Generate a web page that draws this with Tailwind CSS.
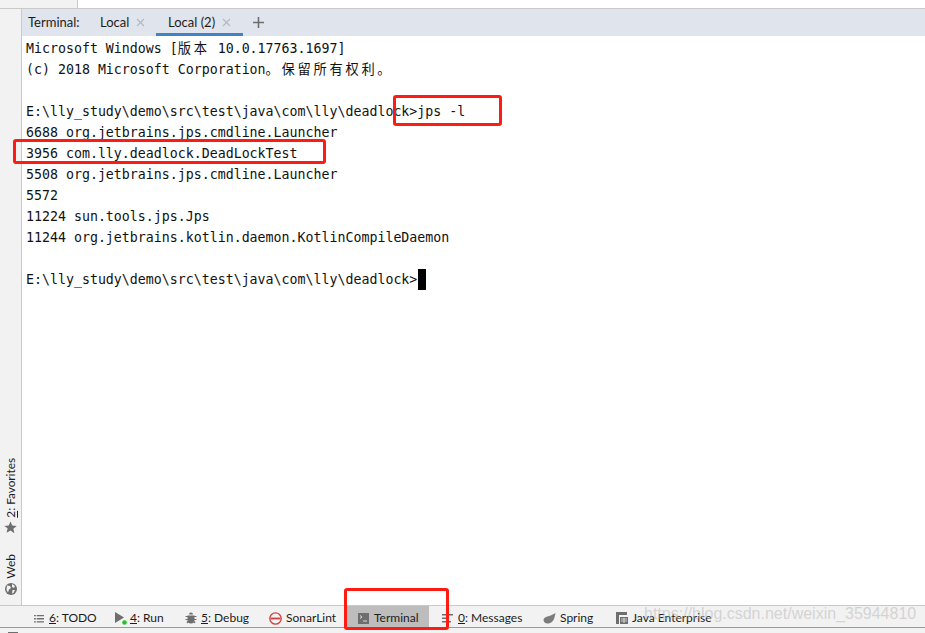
<!DOCTYPE html>
<html lang="zh">
<head>
  <meta charset="UTF-8" />
  <title>Terminal</title>
  <script src="https://cdn.jsdelivr.net/npm/@tailwindcss/browser@4"></script>
</head>
<body class="relative w-[925px] h-[633px] overflow-hidden bg-white flex flex-col font-['Lato',sans-serif] text-[#1c1c1c]">

  <!-- top strip -->
  <div class="h-[8px] flex shrink-0 border-b border-[#c9c9c9] box-content">
    <div class="w-[78px] bg-[#f2f2f2] border-r border-[#c9c9c9]"></div>
    <div class="flex-1 bg-white"></div>
  </div>

  <div class="flex-1 flex min-h-0">
    <!-- left stripe -->
    <div class="w-[22px] shrink-0 bg-[#f2f2f2] border-r border-[#c9c9c9] flex flex-col justify-end items-center pb-[10px]">
      <div class="flex flex-col items-center gap-[4px] mb-[20px]">
        <span class="[writing-mode:vertical-rl] rotate-180 text-[11.800px] leading-[14px]"><span class="underline">2</span>: Favorites</span>
        <svg width="13" height="13" viewBox="0 0 14 14"><path d="M7 0.500l1.900 4.400 4.800.4-3.600 3.100 1.100 4.700L7 10.100l-4.200 2.500 1.100-4.700L.3 5.300l4.800-.4z" fill="#6e6e6e"/></svg>
      </div>
      <div class="flex flex-col items-center gap-[4px]">
        <span class="[writing-mode:vertical-rl] rotate-180 text-[12px] leading-[14px]">Web</span>
        <svg width="12" height="12" viewBox="0 0 12 12"><circle cx="6" cy="6" r="6" fill="#6e6e6e"/><path d="M2 2.500l3 .5 1 2-2 1.500-1 3-1.500-2.500zM7 1l3 2-1 2-2-1zM7.500 7l2.500 0-1.500 3-1.500.5z" fill="#f2f2f2"/></svg>
      </div>
    </div>

    <!-- terminal panel -->
    <div class="flex-1 flex flex-col min-w-0">
      <div class="h-[27px] shrink-0 bg-[#e0e4ec] flex items-stretch text-[13px] pl-[6px]">
        <span class="flex items-center w-[72px]">Terminal:</span>
        <div class="flex items-center gap-[7px] w-[56px]">
          <span>Local</span>
          <svg width="9" height="9" viewBox="0 0 9 9" stroke="#b4b8bf" stroke-width="1.200"><path d="M1 1l7 7M8 1l-7 7"/></svg>
        </div>
        <div class="flex items-center gap-[7px] pl-[12px] w-[87px] border-b-[3px] border-[#4083c9] pt-[3px]">
          <span>Local (2)</span>
          <svg width="9" height="9" viewBox="0 0 9 9" stroke="#b4b8bf" stroke-width="1.200"><path d="M1 1l7 7M8 1l-7 7"/></svg>
        </div>
        <div class="flex items-center ml-[10px]">
          <svg width="11" height="11" viewBox="0 0 11 11" stroke="#6e6e6e" stroke-width="1.600"><path d="M5.500 0v11M0 5.500h11"/></svg>
        </div>
      </div>

      <div class="flex-1 pl-[4px] pt-[2px] font-['DejaVu_Sans_Mono','Noto_Sans_CJK_SC',monospace] text-[13.280px] leading-[21px] text-[#111]">
        <div>Microsoft Windows [<span class="tracking-[2.700px]">版本</span> 10.0.17763.1697]</div>
        <div>(c) 2018 Microsoft Corporation<span class="tracking-[2.700px]">。保留所有权利。</span></div>
        <div>&nbsp;</div>
        <div>E:\lly_study\demo\src\test\java\com\lly\deadlock&gt;jps -l</div>
        <div>6688 org.jetbrains.jps.cmdline.Launcher</div>
        <div>3956 com.lly.deadlock.DeadLockTest</div>
        <div>5508 org.jetbrains.jps.cmdline.Launcher</div>
        <div>5572</div>
        <div>11224 sun.tools.jps.Jps</div>
        <div>11244 org.jetbrains.kotlin.daemon.KotlinCompileDaemon</div>
        <div>&nbsp;</div>
        <div class="flex items-center">E:\lly_study\demo\src\test\java\com\lly\deadlock&gt;<span class="inline-block w-[8px] h-[21px] ml-[1px] bg-black"></span></div>
      </div>
    </div>
  </div>

  <!-- bottom tool window bar -->
  <div class="h-[22px] shrink-0 bg-[#f2f2f2] border-t border-[#c9c9c9] flex items-stretch text-[12px] pl-[34px]">
    <div class="flex items-center gap-[5px] w-[81px] pt-[3px]">
      <svg width="10" height="9" viewBox="0 0 11 10" fill="#6e6e6e"><path d="M0 1h2v1.500H0zM3 1h8v1.500H3zM0 4.500h2V6H0zM3 4.500h8V6H3zM0 8h2v1.500H0zM3 8h8v1.500H3z"/></svg>
      <span><span class="underline">6</span>: TODO</span>
    </div>
    <div class="flex items-center gap-[3px] w-[70px] pt-[3px]">
      <svg width="12" height="13" viewBox="0 0 12 13"><path d="M0 0l9 5.500L0 11z" fill="#6e6e6e"/><circle cx="9.500" cy="10.500" r="2.300" fill="#22c322"/></svg>
      <span><span class="underline">4</span>: Run</span>
    </div>
    <div class="flex items-center gap-[4px] w-[84px] pt-[3px]">
      <svg width="12" height="12" viewBox="0 0 11 12" fill="#6e6e6e"><path d="M3.500 2.500a2 2 0 0 1 4 0zM2 3.500h7v4.500a3.500 3.500 0 0 1-7 0zM0 4h2v1H0zM9 4h2v1H9zM0 7h2v1H0zM9 7h2v1H9zM1 10l1-1 1 1-1 1.500zM10 10l-1-1-1 1 1 1.500z"/></svg>
      <span><span class="underline">5</span>: Debug</span>
    </div>
    <div class="flex items-center gap-[4px] w-[76px] pt-[3px]">
      <svg width="13" height="13" viewBox="0 0 13 13" fill="none" stroke="#d1403c" stroke-width="1.300"><circle cx="6.500" cy="6.500" r="5.700"/><path d="M1.500 6.500h10" stroke-width="1.800"/></svg>
      <span>SonarLint</span>
    </div>
    <div class="flex items-center gap-[5px] w-[84px] pl-[13px] pt-[3px] bg-[#bdbdbd]">
      <svg width="11" height="11" viewBox="0 0 11 11"><rect width="11" height="11" fill="#6e6e6e"/><path d="M2 2.500l2 1.500-2 1.500M5 8h4" fill="none" stroke="#e6e6e6" stroke-width="0.900"/></svg>
      <span>Terminal</span>
    </div>
    <div class="flex items-center gap-[5px] w-[114px] pl-[13px] pt-[3px]">
      <svg width="11" height="11" viewBox="0 0 11 11" fill="#6e6e6e"><path d="M0 1h11v1.500H0zM0 4.500h7V6H0zM0 8h9v1.500H0z"/></svg>
      <span><span class="underline">0</span>: Messages</span>
    </div>
    <div class="flex items-center gap-[4px] w-[73px] pt-[3px]">
      <svg width="13" height="11" viewBox="0 0 12 11"><path d="M12 0C11 5 10 10 5 10.500 2 11 0 9 0 7 .5 3 6 4 12 0z" fill="#7c7c7c"/></svg>
      <span>Spring</span>
    </div>
    <div class="flex items-center gap-[4px] pt-[3px]">
      <svg width="12" height="12" viewBox="0 0 12 12"><path d="M0 0h11v3H3v9H0z" fill="#6e6e6e"/><rect x="4" y="5" width="8" height="7" fill="#6e6e6e"/><path d="M5 7h6M5 9h6M8 6v5" stroke="#f2f2f2" stroke-width="0.700"/></svg>
      <span>Java Enterprise</span>
    </div>
  </div>

  <!-- clipped status bar -->
  <div class="h-[6px] shrink-0 overflow-hidden bg-[#f2f2f2] border-t border-[#9a9a9a] flex items-start gap-[12px] pl-[8px] pt-[3px] whitespace-nowrap text-[12px] leading-[14px] text-[#333]">
    <span class="w-[10px] h-[2px] mt-[1px] bg-[#6e6e6e] shrink-0"></span>
    <span>Build completed successfully in 3 s 512 ms</span>
  </div>

  <!-- annotations over the screenshot -->
  <div class="absolute left-[393px] top-[95px] w-[109px] h-[31px] border-[3px] border-[#fc1c14] rounded-[3px]"></div>
  <div class="absolute left-[13px] top-[139px] w-[313px] h-[25px] border-[3px] border-[#fc1c14] rounded-[3px]"></div>
  <div class="absolute left-[344px] top-[588px] w-[105px] h-[42px] border-[3px] border-[#fc1c14] rounded-[3px]"></div>
  <div class="absolute left-[644px] top-[604px] font-['Liberation_Sans',sans-serif] text-[16px] leading-[20px] text-[#b4b4b4]/50 whitespace-nowrap">https://blog.csdn.net/weixin_35944810</div>
</body>
</html>
